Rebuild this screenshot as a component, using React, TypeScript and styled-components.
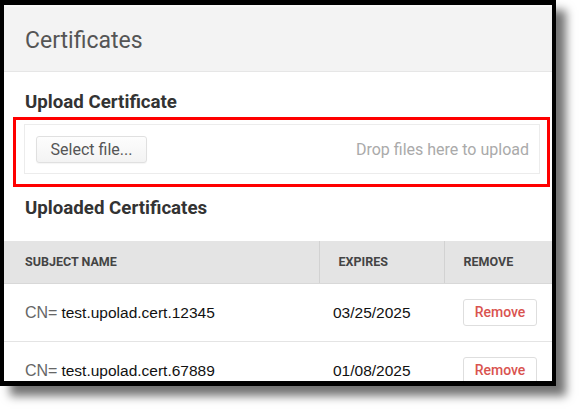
import styled, { createGlobalStyle } from "styled-components";

const GlobalStyle = createGlobalStyle`
  html, body {
    margin: 0;
    padding: 0;
    background: #ffffff;
  }
  body {
    font-family: Roboto, "Liberation Sans", Arial, sans-serif;
  }
`;

const S = {
  Page: styled.div`
    width: 580px;
    height: 413px;
    overflow: hidden;
  `,
  Frame: styled.div`
    width: 548px;
    height: 376px;
    border-style: solid;
    border-color: #000;
    border-width: 5px 4px 5px 4px;
    background: #fff;
    overflow: hidden;
    box-shadow: 10px 10px 9px rgba(0, 0, 0, 0.55);
  `,
  Header: styled.div`
    height: 61px;
    display: flex;
    align-items: center;
    padding: 3px 0 0 21px;
    background: #f3f3f3;
    border-top: 2px solid #f8f8f8;
    border-bottom: 1px solid #e6e6e6;
  `,
  HeaderTitle: styled.h1`
    margin: 0;
    font-size: 23px;
    font-weight: 400;
    color: #555;
  `,
  Section: styled.div`
    display: flex;
    flex-direction: column;
    padding: 18px 0 0 21px;
  `,
  SectionTitle: styled.h2<{ $gap: number }>`
    margin: 0 0 ${(p) => p.$gap}px;
    font-size: 18.7px;
    line-height: 24px;
    font-weight: 700;
    color: #333;
  `,
  Highlight: styled.div`
    margin: 0 2px 9px -12px;
    border: 3px solid #ff0000;
    padding: 4px 7px 10px 8px;
  `,
  DropZone: styled.div`
    height: 48px;
    display: flex;
    align-items: center;
    justify-content: space-between;
    padding: 0 10px 0 11px;
    border: 1px solid #ececec;
    background: #fff;
  `,
  SelectButton: styled.button`
    height: 27px;
    width: 111px;
    padding: 0;
    font-family: Roboto, sans-serif;
    font-size: 16px;
    color: #555;
    background: linear-gradient(#fdfdfd, #f3f3f3);
    border: 1px solid #e0e0e0;
    border-radius: 3px;
    box-shadow: 0 1px 1px rgba(0, 0, 0, 0.04);
  `,
  DropHint: styled.span`
    font-size: 16px;
    color: #aaa;
  `,
  Table: styled.table`
    width: 100%;
    margin-top: 21px;
    border-collapse: collapse;
    table-layout: fixed;
  `,
  Th: styled.th<{ $width: number; $pad: number }>`
    box-sizing: border-box;
    width: ${(p) => p.$width}px;
    height: 42px;
    padding: 0 0 0 ${(p) => p.$pad}px;
    text-align: left;
    background: #e4e4e4;
    border-bottom: 1px solid #d8d8d8;
    border-left: 1px solid #d2d2d2;
    font-size: 12.5px;
    font-weight: 700;
    color: #444;
    &:first-child {
      border-left: none;
    }
  `,
  Td: styled.td<{ $pad: number }>`
    height: 57px;
    padding: 0 0 0 ${(p) => p.$pad}px;
    border-bottom: 1px solid #e4e4e4;
    vertical-align: middle;
    white-space: nowrap;
  `,
  Prefix: styled.span`
    font-family: "Liberation Sans", Arial, sans-serif;
    font-size: 16px;
    color: #666;
  `,
  Value: styled.span`
    font-family: "Liberation Sans", Arial, sans-serif;
    font-size: 15.5px;
    color: #111;
  `,
  RemoveButton: styled.button`
    width: 74px;
    height: 27px;
    padding: 0;
    font-family: Roboto, sans-serif;
    font-size: 14px;
    font-weight: 500;
    color: #d9534f;
    background: #fff;
    border: 1px solid #dedede;
    border-radius: 3px;
  `,
} as const;

const certificates = [
  { name: "test.upolad.cert.12345", expires: "03/25/2025" },
  { name: "test.upolad.cert.67889", expires: "01/08/2025" },
];

const App: React.FC = () => {
  return <S.Page>
    <GlobalStyle />
    <S.Frame>
      <S.Header>
        <S.HeaderTitle>Certificates</S.HeaderTitle>
      </S.Header>

      <S.Section>
        <S.SectionTitle $gap={3}>Upload Certificate</S.SectionTitle>
        <S.Highlight>
          <S.DropZone>
            <S.SelectButton>Select file...</S.SelectButton>
            <S.DropHint>Drop files here to upload</S.DropHint>
          </S.DropZone>
        </S.Highlight>
        <S.SectionTitle $gap={0}>Uploaded Certificates</S.SectionTitle>
      </S.Section>

      <S.Table>
        <thead>
          <tr>
            <S.Th $width={315} $pad={21}>SUBJECT NAME</S.Th>
            <S.Th $width={125} $pad={19}>EXPIRES</S.Th>
            <S.Th $width={108} $pad={19}>REMOVE</S.Th>
          </tr>
        </thead>
        <tbody>
          {certificates.map((cert) => (
            <tr key={cert.name}>
              <S.Td $pad={21}>
                <S.Prefix>CN=</S.Prefix> <S.Value>{cert.name}</S.Value>
              </S.Td>
              <S.Td $pad={14}>
                <S.Value>{cert.expires}</S.Value>
              </S.Td>
              <S.Td $pad={19}>
                <S.RemoveButton>Remove</S.RemoveButton>
              </S.Td>
            </tr>
          ))}
        </tbody>
      </S.Table>
    </S.Frame>
  </S.Page>;
};

export default App;
